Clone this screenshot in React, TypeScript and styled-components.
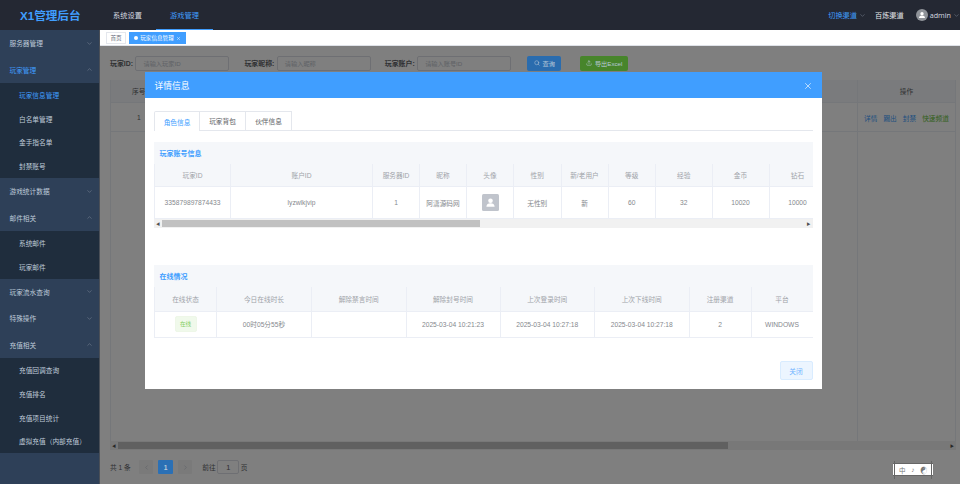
import styled, { createGlobalStyle } from 'styled-components';
import { ChevronDown, ChevronLeft, ChevronRight, ChevronUp, Search, Upload, X } from 'lucide-react';

const Global = createGlobalStyle`
  html, body { margin: 0; padding: 0; background: #fff; }
  body { font-family: "Liberation Sans", "Noto Sans CJK SC", sans-serif; font-size: 6.7px; color: #606266; }
  * { box-sizing: border-box; }
`;

const Shell = styled.div`
  width: 960px;
  height: 484px;
  display: flex;
  flex-direction: column;
  overflow: hidden;
`;

const TopBar = styled.header`
  height: 30px;
  flex-shrink: 0;
  background: #242833;
  display: flex;
  align-items: stretch;
  color: #d6dae0;
`;

const Logo = styled.div`
  width: 99px;
  display: flex;
  align-items: center;
  padding-left: 20px;
  color: #409eff;
  font-size: 11.6px;
  font-weight: 700;
  white-space: nowrap;
`;

const NavItem = styled.div<{ $active?: boolean }>`
  width: 57px;
  display: flex;
  align-items: center;
  justify-content: center;
  font-size: 7.2px;
  color: ${({ $active }) => ($active ? '#409eff' : '#d6dae0')};
  border-bottom: 1px solid ${({ $active }) => ($active ? '#409eff' : 'transparent')};
`;

const TopRight = styled.div`
  margin-left: auto;
  display: flex;
  align-items: center;
  font-size: 7.2px;
`;

const Channel = styled.span`
  color: #409eff;
  display: flex;
  align-items: center;
  gap: 2px;
  margin-right: 9px;
`;

const ChannelName = styled.span`
  margin-right: 12px;
  color: #e6e8eb;
`;

const UserBlock = styled.span`
  display: flex;
  align-items: center;
  gap: 2px;
  font-family: "Open Sans", "Liberation Sans", sans-serif;
`;

const RoundAvatar = styled.span`
  width: 12px;
  height: 12px;
  border-radius: 50%;
  background: #8f9399;
  display: flex;
  align-items: center;
  justify-content: center;
`;

const Body = styled.div`
  flex: 1;
  display: flex;
  min-height: 0;
`;

const Sidebar = styled.aside`
  width: 99.5px;
  flex-shrink: 0;
  background: #2e4058;
  border-right: 1px solid #4a4f57;
`;

const MenuRow = styled.div<{ $active?: boolean }>`
  height: 26.6px;
  padding: 0 6px 0 9.5px;
  display: flex;
  align-items: center;
  justify-content: space-between;
  font-size: 6.7px;
  color: ${({ $active }) => ($active ? '#409eff' : '#bfcbd9')};
`;

const SubMenu = styled.div`
  background: #1f2d3d;
`;

const SubRow = styled.div<{ $active?: boolean }>`
  height: 23.7px;
  padding-left: 19px;
  display: flex;
  align-items: center;
  font-size: 6.7px;
  color: ${({ $active }) => ($active ? '#409eff' : '#bfcbd9')};
`;

const Main = styled.main`
  flex: 1;
  min-width: 0;
  position: relative;
  display: flex;
  flex-direction: column;
`;

const TagBar = styled.div`
  height: 16px;
  flex-shrink: 0;
  padding: 2px 0 0 6.5px;
  display: flex;
  gap: 3px;
  background: #fff;
  border-bottom: 1px solid #dfe2e8;
`;

const Tag = styled.div<{ $active?: boolean }>`
  height: 12px;
  padding: 0 3.5px;
  display: flex;
  align-items: center;
  gap: 2.5px;
  font-size: 5.6px;
  border: 1px solid ${({ $active }) => ($active ? '#409eff' : '#e4e7ed')};
  background: ${({ $active }) => ($active ? '#409eff' : '#fff')};
  color: ${({ $active }) => ($active ? '#fff' : '#6b7180')};
`;

const TagDot = styled.span`
  width: 4px;
  height: 4px;
  border-radius: 50%;
  background: #fff;
`;

const Content = styled.div`
  flex: 1;
  min-height: 0;
  padding: 9px 4px 0 10.5px;
  display: flex;
  flex-direction: column;
`;

const Filters = styled.div`
  height: 16px;
  display: flex;
  align-items: center;
`;

const FilterLabel = styled.label`
  font-size: 6.9px;
  font-weight: 700;
  color: #606266;
  white-space: nowrap;
`;

const FilterInput = styled.div<{ $gap: number }>`
  width: 94px;
  height: 15px;
  margin: 0 ${({ $gap }) => $gap}px 0 2.5px;
  padding-left: 7px;
  display: flex;
  align-items: center;
  border: 1px solid #dcdfe6;
  border-radius: 2px;
  font-size: 6.2px;
  color: #c0c4cc;
  background: #fff;
`;

// the reference keeps these brighter than a plain 50% dim would, so they sit over the overlay
const ActionButton = styled.div<{ $bg: string; $width: number; $gap?: number }>`
  position: relative;
  z-index: 1;
  width: ${({ $width }) => $width}px;
  height: 15px;
  margin-right: ${({ $gap }) => $gap ?? 0}px;
  display: flex;
  align-items: center;
  justify-content: center;
  gap: 3px;
  border-radius: 2px;
  background: ${({ $bg }) => $bg};
  color: #b9c9d8;
  font-size: 6.2px;
`;

const BackTable = styled.div`
  margin-top: 9px;
  height: 361px;
  border-left: 1px solid #ebeef5;
  display: flex;
  position: relative;
`;

const BackColumn = styled.div<{ $fixed?: boolean }>`
  flex: ${({ $fixed }) => ($fixed ? '0 0 99px' : '1')};
  border-left: ${({ $fixed }) => ($fixed ? '1px solid #ebeef5' : 'none')};
  border-right: ${({ $fixed }) => ($fixed ? '1px solid #ebeef5' : 'none')};
`;

const BackHead = styled.div<{ $pad?: number }>`
  height: 23px;
  padding-left: ${({ $pad }) => $pad ?? 0}px;
  display: flex;
  align-items: center;
  justify-content: ${({ $pad }) => ($pad ? 'flex-start' : 'center')};
  background: #f5f7fa;
  color: #606266;
  font-size: 6.7px;
  border-bottom: 1px solid #ebeef5;
`;

const BackRow = styled.div<{ $pad?: number }>`
  height: 29px;
  padding-left: ${({ $pad }) => $pad ?? 0}px;
  padding-top: ${({ $pad }) => ($pad ? 0 : 1)}px;
  display: flex;
  align-items: center;
  justify-content: ${({ $pad }) => ($pad ? 'flex-start' : 'center')};
  gap: 6px;
  border-bottom: 1px solid #ebeef5;
  font-size: 6.7px;
`;

const OpLink = styled.span<{ $green?: boolean }>`
  color: ${({ $green }) => ($green ? '#67c23a' : '#409eff')};
`;

const Bar = styled.div`
  height: 9px;
  display: flex;
  align-items: center;
  background: #f1f1f1;
  flex-shrink: 0;
`;

const BarArrow = styled.span<{ $right?: boolean }>`
  width: 8px;
  flex-shrink: 0;
  height: 9px;
  margin-left: ${({ $right }) => ($right ? 'auto' : '0')};
  display: flex;
  align-items: center;
  justify-content: center;
  color: #505050;
  font-size: 4px;
`;

const BarThumb = styled.span<{ $width: number }>`
  width: ${({ $width }) => $width}px;
  height: 7px;
  background: #c1c1c1;
`;

const Pager = styled.div`
  margin-top: 10px;
  display: flex;
  align-items: center;
  height: 14px;
  font-size: 6.7px;
  color: #606266;
`;

const PagerTotal = styled.span`
  margin-right: 8px;
  white-space: nowrap;
`;

const PageButton = styled.span<{ $active?: boolean }>`
  position: ${({ $active }) => ($active ? 'relative' : 'static')};
  z-index: ${({ $active }) => ($active ? 1 : 'auto')};
  width: 14.5px;
  height: 14px;
  margin-right: 5px;
  display: flex;
  align-items: center;
  justify-content: center;
  border-radius: 1px;
  font-weight: 700;
  background: ${({ $active }) => ($active ? '#2b70b5' : '#f4f4f5')};
  color: ${({ $active }) => ($active ? '#b9c9d8' : '#c0c4cc')};
`;

const PageJump = styled.span`
  margin-left: 5px;
  display: flex;
  align-items: center;
  gap: 1.5px;
`;

const PageInput = styled.span`
  width: 22px;
  height: 14px;
  display: flex;
  align-items: center;
  justify-content: center;
  border: 1px solid #dcdfe6;
  border-radius: 2px;
  font-size: 7.4px;
`;

const Overlay = styled.div`
  position: absolute;
  top: 16px;
  left: 0;
  right: 0;
  bottom: 0;
  background: rgba(0, 0, 0, 0.5);
  padding: 26px 0 0 45.5px;
`;

const Modal = styled.section`
  width: 677px;
  height: 317px;
  background: #fff;
  display: flex;
  flex-direction: column;
`;

const ModalHeader = styled.div`
  height: 25.5px;
  flex-shrink: 0;
  padding: 2px 9px 0 9.5px;
  display: flex;
  align-items: center;
  justify-content: space-between;
  background: #409eff;
  color: #fff;
  font-size: 8.75px;
`;

const ModalBody = styled.div`
  flex: 1;
  padding: 13.5px 9.5px 9px 9px;
  display: flex;
  flex-direction: column;
`;

const Tabs = styled.div`
  height: 20px;
  display: flex;
  border-bottom: 1px solid #e4e7ed;
`;

const TabItem = styled.div<{ $active?: boolean }>`
  width: 46px;
  height: ${({ $active }) => ($active ? '20px' : '19px')};
  display: flex;
  align-items: center;
  justify-content: center;
  font-size: 6.7px;
  background: #fff;
  color: ${({ $active }) => ($active ? '#409eff' : '#606266')};
  border: 1px solid #e4e7ed;
  border-left-width: ${({ $active }) => ($active ? '1px' : '0')};
  border-bottom: none;
  border-radius: ${({ $active }) => ($active ? '2px 0 0 0' : '0')};
`;

const Section = styled.div<{ $top: number }>`
  margin-top: ${({ $top }) => $top}px;
  overflow: hidden;
`;

const SectionTitle = styled.div`
  height: 22px;
  padding-left: 5.5px;
  display: flex;
  align-items: center;
  background: #f5f7fa;
  color: #409eff;
  font-size: 7px;
  font-weight: 700;
`;

const Table = styled.table<{ $width: number }>`
  width: ${({ $width }) => $width}px;
  table-layout: fixed;
  border-collapse: collapse;
`;

const HeadCell = styled.th<{ $height: number }>`
  height: ${({ $height }) => $height}px;
  padding: 0;
  background: #f5f7fa;
  color: #a0a3a9;
  font-size: 6.7px;
  font-weight: 400;
  text-align: center;
  border: 1px solid #ebeef5;
  border-top: none;
`;

const Cell = styled.td<{ $height: number }>`
  height: ${({ $height }) => $height}px;
  padding: 0;
  color: #85888d;
  font-size: 6.7px;
  text-align: center;
  border: 1px solid #ebeef5;
  border-top: none;
  white-space: nowrap;
`;

const SquareAvatar = styled.span`
  width: 17px;
  height: 17px;
  border-radius: 1.5px;
  background: #c0c4cc;
  display: inline-flex;
  align-items: center;
  justify-content: center;
  vertical-align: middle;
`;

const OnlineTag = styled.span`
  width: 22px;
  height: 16px;
  display: inline-flex;
  align-items: center;
  justify-content: center;
  background: #f0f9eb;
  border: 1px solid #eef7e8;
  border-radius: 2px;
  color: #85ce61;
  font-size: 5.6px;
  vertical-align: middle;
`;

const ModalFooter = styled.div`
  margin-top: auto;
  display: flex;
  justify-content: flex-end;
`;

const CloseButton = styled.div`
  width: 33px;
  height: 19px;
  display: flex;
  align-items: center;
  justify-content: center;
  background: #ecf5ff;
  border: 1px solid #d9ecff;
  border-radius: 2px;
  color: #6cb3ff;
  font-size: 6.7px;
`;

const ImeBadge = styled.div`
  position: absolute;
  right: 27px;
  bottom: 8px;
  width: 40px;
  height: 13px;
  display: flex;
  align-items: center;
  justify-content: space-around;
  padding: 0 3px;
  background: #fff;
  border-top: 1px solid #666;
  border-bottom: 1px solid #666;
  color: #777;
  font-size: 6.5px;
  &::before, &::after {
    content: '';
    position: absolute;
    top: -3px;
    bottom: -4px;
    width: 1px;
    background: #666;
  }
  &::before { left: 1px; }
  &::after { right: 1px; }
`;

const ChevronDownIcon = () => <ChevronDown size={7} strokeWidth={1.5} color="#8a94a3" />;
const ChevronUpIcon = () => <ChevronUp size={7} strokeWidth={1.5} color="#8a94a3" />;

const UserGlyph = ({ size }: { size: number }) => (
  <svg width={size} height={size} viewBox="0 0 24 24" fill="#fff">
    <circle cx="12" cy="8" r="5" />
    <path d="M3 21c0-5 4-7.500 9-7.500s9 2.500 9 7.500z" />
  </svg>
);

const accountCols = [
  { label: '玩家ID', width: 76 },
  { label: '账户ID', width: 142 },
  { label: '服务器ID', width: 47 },
  { label: '昵称', width: 47 },
  { label: '头像', width: 47 },
  { label: '性别', width: 47.5 },
  { label: '新/老用户', width: 47 },
  { label: '等级', width: 47.5 },
  { label: '经验', width: 56.5 },
  { label: '金币', width: 57 },
  { label: '钻石', width: 57 },
];

const onlineCols = [
  { label: '在线状态', width: 62 },
  { label: '今日在线时长', width: 95 },
  { label: '解除禁言时间', width: 94.5 },
  { label: '解除封号时间', width: 94 },
  { label: '上次登录时间', width: 94.5 },
  { label: '上次下线时间', width: 94.5 },
  { label: '注册渠道', width: 62 },
  { label: '平台', width: 62 },
];

const total = (cols: { width: number }[]) => cols.reduce((sum, c) => sum + c.width, 0);

export default function App() {
  return (
    <Shell>
      <Global />
      <TopBar>
        <Logo>X1管理后台</Logo>
        <NavItem>系统设置</NavItem>
        <NavItem $active>游戏管理</NavItem>
        <TopRight>
          <Channel>切换渠道 <ChevronDownIcon /></Channel>
          <ChannelName>百炼渠道</ChannelName>
          <UserBlock>
            <RoundAvatar><UserGlyph size={8} /></RoundAvatar>
            admin
            <ChevronDownIcon />
          </UserBlock>
        </TopRight>
      </TopBar>
      <Body>
        <Sidebar>
          <MenuRow>服务器管理 <ChevronDownIcon /></MenuRow>
          <MenuRow $active>玩家管理 <ChevronUpIcon /></MenuRow>
          <SubMenu>
            <SubRow $active>玩家信息管理</SubRow>
            <SubRow>白名单管理</SubRow>
            <SubRow>金手指名单</SubRow>
            <SubRow>封禁账号</SubRow>
          </SubMenu>
          <MenuRow>游戏统计数据 <ChevronDownIcon /></MenuRow>
          <MenuRow>邮件相关 <ChevronUpIcon /></MenuRow>
          <SubMenu>
            <SubRow>系统邮件</SubRow>
            <SubRow>玩家邮件</SubRow>
          </SubMenu>
          <MenuRow>玩家流水查询 <ChevronDownIcon /></MenuRow>
          <MenuRow>特殊操作 <ChevronDownIcon /></MenuRow>
          <MenuRow>充值相关 <ChevronUpIcon /></MenuRow>
          <SubMenu>
            <SubRow>充值回调查询</SubRow>
            <SubRow>充值排名</SubRow>
            <SubRow>充值项目统计</SubRow>
            <SubRow>虚拟充值（内部充值）</SubRow>
          </SubMenu>
        </Sidebar>
        <Main>
          <TagBar>
            <Tag>首页</Tag>
            <Tag $active><TagDot />玩家信息管理 <X size={5} /></Tag>
          </TagBar>
          <Content>
            <Filters>
              <FilterLabel>玩家ID:</FilterLabel>
              <FilterInput $gap={15}>请输入玩家ID</FilterInput>
              <FilterLabel>玩家昵称:</FilterLabel>
              <FilterInput $gap={14}>请输入昵称</FilterInput>
              <FilterLabel>玩家账户:</FilterLabel>
              <FilterInput $gap={16}>请输入账号ID</FilterInput>
              <ActionButton $bg="#2a6cae" $width={34} $gap={19}><Search size={6} />查询</ActionButton>
              <ActionButton $bg="#47852b" $width={48}><Upload size={6} />导出Excel</ActionButton>
            </Filters>
            <BackTable>
              <BackColumn>
                <BackHead $pad={21}>序号</BackHead>
                <BackRow $pad={26}>1</BackRow>
              </BackColumn>
              <BackColumn $fixed>
                <BackHead>操作</BackHead>
                <BackRow>
                  <OpLink>详情</OpLink>
                  <OpLink>踢出</OpLink>
                  <OpLink>封禁</OpLink>
                  <OpLink $green>快速频道</OpLink>
                </BackRow>
              </BackColumn>
            </BackTable>
            <Bar>
              <BarArrow>◀</BarArrow>
              <BarThumb $width={610} />
              <BarArrow $right>▶</BarArrow>
            </Bar>
            <Pager>
              <PagerTotal>共 1 条</PagerTotal>
              <PageButton><ChevronLeft size={7} /></PageButton>
              <PageButton $active>1</PageButton>
              <PageButton><ChevronRight size={7} /></PageButton>
              <PageJump>前往 <PageInput>1</PageInput> 页</PageJump>
            </Pager>
          </Content>
          <Overlay>
            <Modal>
              <ModalHeader>
                详情信息
                <X size={10} strokeWidth={1.5} />
              </ModalHeader>
              <ModalBody>
                <Tabs>
                  <TabItem $active>角色信息</TabItem>
                  <TabItem>玩家背包</TabItem>
                  <TabItem>伙伴信息</TabItem>
                </Tabs>
                <Section $top={11}>
                  <SectionTitle>玩家账号信息</SectionTitle>
                  <Table $width={total(accountCols)}>
                    <colgroup>
                      {accountCols.map((c) => <col key={c.label} style={{ width: c.width }} />)}
                    </colgroup>
                    <thead>
                      <tr>{accountCols.map((c) => <HeadCell key={c.label} $height={22.5}>{c.label}</HeadCell>)}</tr>
                    </thead>
                    <tbody>
                      <tr>
                        <Cell $height={32}>335879897874433</Cell>
                        <Cell $height={32}>lyzwlkjvip</Cell>
                        <Cell $height={32}>1</Cell>
                        <Cell $height={32}>阿潇源码网</Cell>
                        <Cell $height={32}><SquareAvatar><UserGlyph size={11} /></SquareAvatar></Cell>
                        <Cell $height={32}>无性别</Cell>
                        <Cell $height={32}>新</Cell>
                        <Cell $height={32}>60</Cell>
                        <Cell $height={32}>32</Cell>
                        <Cell $height={32}>10020</Cell>
                        <Cell $height={32}>10000</Cell>
                      </tr>
                    </tbody>
                  </Table>
                  <Bar>
                    <BarArrow>◀</BarArrow>
                    <BarThumb $width={318} />
                    <BarArrow $right>▶</BarArrow>
                  </Bar>
                </Section>
                <Section $top={37}>
                  <SectionTitle>在线情况</SectionTitle>
                  <Table $width={total(onlineCols)}>
                    <colgroup>
                      {onlineCols.map((c) => <col key={c.label} style={{ width: c.width }} />)}
                    </colgroup>
                    <thead>
                      <tr>{onlineCols.map((c) => <HeadCell key={c.label} $height={24}>{c.label}</HeadCell>)}</tr>
                    </thead>
                    <tbody>
                      <tr>
                        <Cell $height={26}><OnlineTag>在线</OnlineTag></Cell>
                        <Cell $height={26}>00时05分55秒</Cell>
                        <Cell $height={26} />
                        <Cell $height={26}>2025-03-04 10:21:23</Cell>
                        <Cell $height={26}>2025-03-04 10:27:18</Cell>
                        <Cell $height={26}>2025-03-04 10:27:18</Cell>
                        <Cell $height={26}>2</Cell>
                        <Cell $height={26}>WINDOWS</Cell>
                      </tr>
                    </tbody>
                  </Table>
                </Section>
                <ModalFooter>
                  <CloseButton>关闭</CloseButton>
                </ModalFooter>
              </ModalBody>
            </Modal>
          </Overlay>
          <ImeBadge><span>中</span><span>♪</span><span>☯</span></ImeBadge>
        </Main>
      </Body>
    </Shell>
  );
}
